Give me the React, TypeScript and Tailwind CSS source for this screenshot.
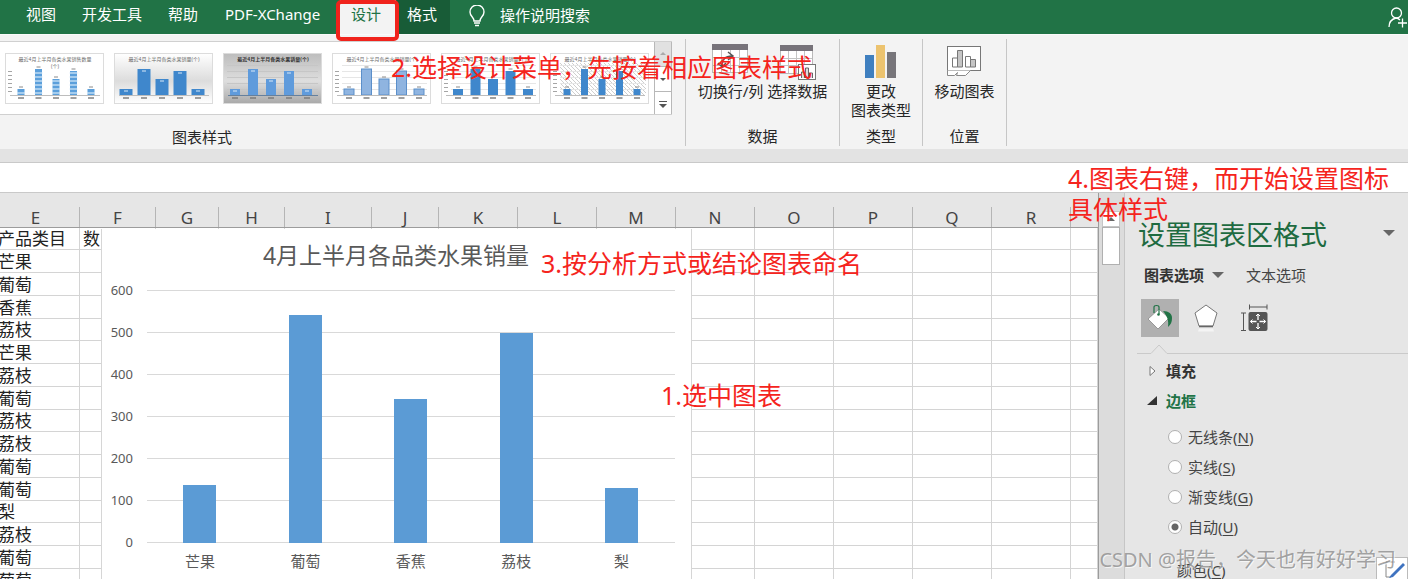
import React from "react";

const columns = [
  { name: "E", width: "w-[80px]" },
  { name: "F", width: "w-[76px]" },
  { name: "G", width: "w-[63px]" },
  { name: "H", width: "w-[66px]" },
  { name: "I", width: "w-[87px]" },
  { name: "J", width: "w-[67px]" },
  { name: "K", width: "w-[79px]" },
  { name: "L", width: "w-[79px]" },
  { name: "M", width: "w-[79px]" },
  { name: "N", width: "w-[79px]" },
  { name: "O", width: "w-[79px]" },
  { name: "P", width: "w-[79px]" },
  { name: "Q", width: "w-[79px]" },
  { name: "R", width: "w-[79px]" },
  { name: "", width: "" },
];

const rows = [
  "产品类目", "芒果", "葡萄", "香蕉", "荔枝", "芒果", "荔枝", "葡萄",
  "荔枝", "荔枝", "葡萄", "葡萄", "梨", "荔枝", "葡萄", "葡萄",
];

const sales = [
  { name: "芒果", value: 137 },
  { name: "葡萄", value: 542 },
  { name: "香蕉", value: 344 },
  { name: "荔枝", value: 500 },
  { name: "梨", value: 132 },
];

type Look = "striped" | "fade" | "dark" | "pale" | "plain" | "hatched";

function Thumb({ look }: { look: Look }) {
  const heights = [6, 26, 16, 24, 6];
  const wide = look === "fade";
  const barWidth = wide ? 13 : look === "hatched" || look === "striped" ? 7 : 10;
  const color = look === "pale" ? "#8fb4e0" : look === "dark" ? "#5f9bdc" : look === "striped" ? "#5b9fdb" : "#3f87cc";
  const first = look === "pale" || look === "plain" || look === "hatched" ? 17 : wide ? 12 : look === "dark" ? 12 : 16;
  const step = wide || look === "dark" ? 18 : 17.5;
  const grid = look === "striped" ? [] : [12, 18, 24, 30, 36];
  return (
    <svg viewBox="0 0 99 51" className="block h-[51px] w-[99px]" aria-hidden="true">
      <defs>
        <linearGradient id={"bg-" + look} x1="0" y1="0" x2="0" y2="1">
          <stop offset="0" stopColor={look === "dark" ? "#bdbdbd" : "#ffffff"} />
          <stop offset="0.55" stopColor={look === "dark" ? "#dedede" : look === "fade" ? "#dcdcdc" : "#ffffff"} />
          <stop offset="1" stopColor={look === "dark" ? "#a9a9a9" : "#ffffff"} />
        </linearGradient>
        <pattern id="hatch" width="4" height="4" patternUnits="userSpaceOnUse">
          <path d="M0 0L4 4" stroke="#cfcfcf" strokeWidth="1" />
        </pattern>
      </defs>
      <rect x="0.5" y="0.5" width="98" height="50" fill={"url(#bg-" + look + ")"} stroke="#dcdcdc" />
      {look === "hatched" && <rect x="10" y="10" width="86" height="32" fill="url(#hatch)" />}
      {look !== "fade" &&
        grid.map((y) => (
          <path key={y} d={`M${look === "dark" ? 4 : 10} ${y}.5H95`} stroke={look === "dark" ? "#c6c6c6" : "#e6e6e6"} />
        ))}
      {look !== "fade" && look !== "dark" &&
        [18, 22, 26, 30, 34, 38].map((y) => <path key={y} d={`M3 ${y}.5h4`} stroke="#a5a5a5" />)}
      <text x="50" y="8" textAnchor="middle" fontSize="5" fontWeight={look === "dark" ? 700 : 400} fill={look === "dark" ? "#333333" : "#6b6b6b"}>
        {look === "striped" ? "最近4月上半月各类水果销售数量" : "最近4月上半月各类水果销量(个)"}
      </text>
      {look === "striped" && <text x="50" y="15" textAnchor="middle" fontSize="5" fill="#6b6b6b">(个)</text>}
      {heights.map((h, i) => {
        const x = first + i * step;
        return (
          <g key={i}>
            <rect x={x - barWidth / 2} y={42 - h} width={barWidth} height={h} fill={color} stroke={look === "pale" ? "#5b8fca" : "none"} />
            {look === "striped" &&
              [2, 6, 10, 14, 18, 22].filter((v) => v < h).map((v) => (
                <path key={v} d={`M${x - 4} ${42 - v}h8`} stroke="#d9ebfa" strokeWidth="1.2" />
              ))}
            <path d={`M${x - 2} ${wide || look === "dark" ? 44 - h : 40 - h}h4`} stroke={wide || look === "dark" ? "#d7e8f8" : "#8a8a8a"} />
            <path d={`M${x - 3} 45h6`} stroke="#777777" strokeWidth="1.4" />
          </g>
        );
      })}
      <path d="M5 42.5H95" stroke={look === "dark" ? "#65809d" : "#bdbdbd"} />
    </svg>
  );
}

function SwapIcon() {
  return (
    <svg viewBox="0 0 38 38" className="h-[38px] w-[38px]" aria-hidden="true">
      <rect x="1.5" y="1.5" width="35" height="28" fill="#fff" stroke="#b9b9b9" />
      <rect x="1" y="1" width="36" height="6" fill="#77737a" />
      <path d="M10.5 7v22M19.5 7v22M28.5 7v22M2 14.5h34M2 22.5h34" stroke="#c4c4c4" />
      <path d="M17 9l5 4-5 4M21 13c-7 0-10 4-10 10M7 20l4 4 4-4" fill="none" stroke="#555" strokeWidth="1.5" />
    </svg>
  );
}

function SelectDataIcon() {
  return (
    <svg viewBox="0 0 38 38" className="h-[38px] w-[38px]" aria-hidden="true">
      <rect x="2.5" y="2.5" width="32" height="28" fill="#fff" stroke="#b9b9b9" />
      <rect x="2" y="2" width="33" height="6" fill="#77737a" />
      <path d="M10.5 8v22M18.5 8v22M26.5 8v22M3 15.5h31M3 22.5h31" stroke="#c4c4c4" />
      <rect x="20.5" y="21.5" width="17" height="15" fill="#fff" stroke="#777" />
      <path d="M23.5 35v-6h3v6M27.5 35V25h3v10M31.5 35v-5h3v5" fill="#ddd" stroke="#666" />
    </svg>
  );
}

function ChartTypeIcon() {
  return (
    <svg viewBox="0 0 38 38" className="h-[38px] w-[38px]" aria-hidden="true">
      <rect x="3" y="12" width="9" height="23" fill="#3f7fbf" />
      <rect x="14" y="2" width="9" height="33" fill="#ecc36f" />
      <rect x="25" y="9" width="9" height="26" fill="#77757a" />
    </svg>
  );
}

function MoveChartIcon() {
  return (
    <svg viewBox="0 0 38 38" className="h-[38px] w-[38px]" aria-hidden="true">
      <rect x="2.5" y="3.5" width="33" height="24" fill="#fff" stroke="#777" />
      <path d="M7.5 24v-9h5v9z" fill="#fff" stroke="#777" />
      <path d="M12.5 24V7.5h5V24z" fill="#c5c5c5" stroke="#777" />
      <path d="M20.5 24V13.5h5V24z" fill="#fff" stroke="#777" />
      <path d="M25.5 24v-7.5h5V24z" fill="#c5c5c5" stroke="#777" />
      <path d="M2.5 27.5v5h7l3-3-1 3h9l5-5" fill="#fff" stroke="#888" />
    </svg>
  );
}

function RibbonGroup({ label, width, children }: { label: string; width: string; children: React.ReactNode }) {
  return (
    <section aria-label={label} className={"mt-1 flex h-[107px] shrink-0 flex-col border-r border-[#c6c6c6] " + width}>
      <div className="flex h-[88px] justify-center gap-1 pt-1">{children}</div>
      <div className="text-center leading-5">{label}</div>
    </section>
  );
}

function RibbonButton({ icon, lines }: { icon: React.ReactNode; lines: string[] }) {
  return (
    <button className="flex h-20 shrink-0 flex-col items-center whitespace-nowrap">
      <span className="mb-px">{icon}</span>
      {lines.map((line) => (
        <span key={line} className="block leading-[19px]">{line}</span>
      ))}
    </button>
  );
}

function SalesChart() {
  const base = 314;
  return (
    <svg viewBox="0 0 591 362" className="absolute left-[101px] top-[36px] h-[362px] w-[591px] bg-white" role="img" aria-label="4月上半月各品类水果销量">
      <path d="M0.5 0V362M590.5 0V362" stroke="#d6d6d6" />
      <text x="295" y="35" textAnchor="middle" fontSize="23" fill="#595959">4月上半月各品类水果销量</text>
      {[0, 100, 200, 300, 400, 500, 600].map((tick) => {
        const y = Math.round(base - tick * 0.42);
        return (
          <g key={tick}>
            <path d={`M46 ${y - 0.5}H574`} stroke="#d9d9d9" />
            <text x="32" y={y + 4} textAnchor="end" fontSize="13" fill="#595959">{tick}</text>
          </g>
        );
      })}
      {sales.map((item, i) => {
        const center = 99 + i * 105.4;
        const height = Math.round(item.value * 0.42);
        return (
          <g key={item.name}>
            <rect x={Math.round(center - 16.6)} y={base - height} width="33" height={height} fill="#5b9bd5" />
            <text x={center} y="338" textAnchor="middle" fontSize="15" fill="#595959">{item.name}</text>
          </g>
        );
      })}
    </svg>
  );
}

function Worksheet() {
  return (
    <main className="relative min-w-0 flex-1 overflow-hidden border-r border-[#9c9c9c] bg-white">
      <table className="w-full table-fixed border-separate border-spacing-0">
        <colgroup>
          {columns.map((c, i) => <col key={i} className={c.width} />)}
        </colgroup>
        <thead>
          <tr>
            {columns.map((c, i) => (
              <th key={i} className="h-[35px] border-b border-[#9c9c9c] bg-[#e6e6e6] p-0 align-bottom text-[17px] font-normal text-[#444]">
                <div className={(i === 0 ? "pr-2 " : "") + (i < 14 ? "h-5 border-r border-[#b5b5b5] leading-[22px]" : "h-5")}>{c.name}</div>
              </th>
            ))}
          </tr>
        </thead>
        <tbody>
          {rows.map((row, r) => (
            <tr key={r}>
              {columns.map((c, i) => (
                <td key={i} className={(r % 4 === 0 ? "h-[22px]" : "h-[23px]") + " whitespace-nowrap border-b border-r border-[#d4d4d4] p-0 align-bottom text-[17px] leading-5 text-[#222]"}>
                  {i === 0 && <span className="-ml-[2px] block">{row}</span>}
                  {i === 1 && r === 0 && <span className="block pl-[3px]">数</span>}
                </td>
              ))}
            </tr>
          ))}
        </tbody>
      </table>
      <SalesChart />
    </main>
  );
}

const borderOptions = [
  { text: "无线条", letter: "N" },
  { text: "实线", letter: "S" },
  { text: "渐变线", letter: "G" },
  { text: "自动", letter: "U" },
];

function FormatPane() {
  return (
    <aside className="w-[283px] shrink-0 bg-[#e6e6e6] text-[15px] text-[#444]">
      <header className="flex items-center pl-[13px] pr-[13px] pt-[24px]">
        <h2 className="flex-1 whitespace-nowrap text-[27px] leading-[36px] text-[#1e6b41]">设置图表区格式</h2>
        <button aria-label="窗格选项">
          <svg viewBox="0 0 12 8" className="mb-1 h-2 w-3"><path d="M0 1h12L6 7z" fill="#666" /></svg>
        </button>
      </header>
      <div className="flex items-center pl-[19px] pt-3 leading-5">
        <button className="flex items-center gap-2 font-bold text-[#333]">
          图表选项
          <svg viewBox="0 0 12 8" className="h-2 w-3" aria-hidden="true"><path d="M0 1h12L6 7z" fill="#666" /></svg>
        </button>
        <button className="ml-[22px]">文本选项</button>
      </div>
      <div className="flex pl-4 pt-[14px]">
        <button aria-label="填充与线条" className="h-[38px] w-[38px] bg-[#b0b0b0]">
          <svg viewBox="0 0 38 38" className="h-full w-full">
            <path d="M7 20L18 10l10 9-11 11z" fill="#fff" stroke="#888" strokeWidth="0.8" />
            <path d="M13 14V8c0-2 5-2 5 0v7" fill="none" stroke="#217346" strokeWidth="1.2" />
            <circle cx="17.5" cy="15.500" r="1.3" fill="#217346" />
            <path d="M22 12c6 0 9 3 9 7 0 4-1 6-4 9 1-7-1-11-5-16z" fill="#217346" />
          </svg>
        </button>
        <button aria-label="效果" className="ml-2 h-[38px] w-[38px]">
          <svg viewBox="0 0 38 38" className="h-full w-full">
            <path d="M19 6l11 8-4 13H12L8 14z" fill="#fff" stroke="#777" />
            <path d="M12 27.5h14" stroke="#666" strokeWidth="1.5" />
            <path d="M12 29.5h14l1 3H11z" fill="#f4f4f4" />
          </svg>
        </button>
        <button aria-label="大小与属性" className="ml-3 h-[38px] w-[38px]">
          <svg viewBox="0 0 38 38" className="h-full w-full" fill="none">
            <path d="M12.5 5.5v5M30 5.500v5M12.5 8H30M4 14h5M4 31.500h5M6.5 14v17.500" stroke="#555" />
            <rect x="11.5" y="13" width="19" height="19" rx="2" fill="#555" />
            <path d="M21 15v6M21 24v6M13.500 22.500h6M22.500 22.500h6" stroke="#fff" strokeWidth="1.3" />
            <path d="M19 17l2-2 2 2M19 28l2 2 2-2M15.500 20.500l-2 2 2 2M26.500 20.500l2 2-2 2" stroke="#fff" />
          </svg>
        </button>
      </div>
      <svg viewBox="0 0 271 11" preserveAspectRatio="xMinYMin slice" className="ml-3 mt-[7px] block h-[11px] w-[271px]" aria-hidden="true">
        <path d="M0 9.5H14L22 1l8 8.5H271" fill="none" stroke="#cacaca" />
      </svg>
      <button className="mt-[6px] flex items-center pl-[23px] font-bold leading-5 text-[#333]">
        <svg viewBox="0 0 10 12" className="mr-2 h-3 w-[10px]" aria-hidden="true"><path d="M2 1.5v9L7 6z" fill="#fff" stroke="#777" /></svg>
        填充
      </button>
      <button className="mt-[10px] flex items-center pl-[22px] font-bold leading-5 text-[#217346]">
        <svg viewBox="0 0 11 12" className="mr-2 h-3 w-[11px]" aria-hidden="true"><path d="M10 1v9H0z" fill="#333" /></svg>
        边框
      </button>
      <fieldset className="flex flex-col gap-[10px] pl-[43px] pt-[16px]">
        {borderOptions.map((o) => (
          <label key={o.letter} className="flex items-center gap-[6px] whitespace-nowrap leading-5">
            <input
              type="radio"
              name="border"
              defaultChecked={o.letter === "U"}
              className="h-[14px] w-[14px] appearance-none rounded-full border border-[#b0b0b0] bg-white checked:bg-[radial-gradient(circle,#666_3px,#fff_4px)]"
            />
            <span>{o.text}(<u className="underline-offset-2">{o.letter}</u>)</span>
          </label>
        ))}
      </fieldset>
      <div className="flex items-start justify-between pl-[52px] pt-5">
        <span className="pt-[3px] leading-5">颜色(<u className="underline-offset-2">C</u>)</span>
        <button aria-label="轮廓颜色" className="h-[32px] w-[32px] border border-[#bbb] bg-white">
          <svg viewBox="0 0 30 30" className="h-full w-full">
            <path d="M9 4v15h5M9 4h9" fill="none" stroke="#888" />
            <path d="M14 17L26 5l2 2-12 12-4 1z" fill="#3f73c0" />
          </svg>
        </button>
      </div>
    </aside>
  );
}

const note = "pointer-events-none absolute z-10 text-[25px] leading-[31px] text-[#f5241d] ";

export default function App() {
  return (
    <div className="relative flex h-screen flex-col overflow-hidden bg-[#e3e3e3] font-['Noto_Sans','Noto_Sans_CJK_SC',sans-serif] text-[15px] text-[#262626]">
      <nav className="flex h-[34px] shrink-0 items-stretch bg-[#217346] pl-[26px] leading-7 text-white">
        <button className="flex w-[56px]">视图</button>
        <button className="flex w-[86px]">开发工具</button>
        <button className="flex w-[57px]">帮助</button>
        <button className="flex w-[115px]">PDF-XChange</button>
        <button className="relative flex w-[56px] bg-[#f3f3f3] pl-[11px] text-[#217346]">
          设计
          <span className="absolute -left-[4px] top-0 h-[41px] w-[63px] rounded-[5px] border-[4px] border-[#f0231c]" />
        </button>
        <button className="flex w-[54px] bg-[#185c37] pl-[11px]">格式</button>
        <button className="flex items-start pl-[18px]">
          <svg viewBox="0 0 18 22" className="mr-[14px] mt-[5px] h-[22px] w-[18px]" fill="none" stroke="#fff" strokeWidth="1.4" aria-hidden="true">
            <path d="M6 16c0-4-4-4.500-4-9a7 7 0 0 1 14 0c0 4.500-4 5-4 9z" />
            <path d="M6 18h6M7 20.500h4" />
          </svg>
          <span className="pt-px">操作说明搜索</span>
        </button>
        <button aria-label="共享" className="ml-auto">
          <svg viewBox="0 0 21 22" className="block h-[22px] w-[21px]" fill="none" stroke="#fff" strokeWidth="1.3" aria-hidden="true">
            <circle cx="9.5" cy="7" r="5" />
            <path d="M2 21c0-5 3-8 7-9 2 0 3 1 4 2M11 17h9M15.500 12.500v9" />
          </svg>
        </button>
      </nav>

      <div className="flex h-[115px] shrink-0 border-t border-[#fafafa] bg-[#f3f3f3]">
        <section aria-label="图表样式" className="mt-1 flex h-[107px] w-[686px] shrink-0 flex-col border-r border-[#c6c6c6]">
          <div className="mt-[2px] flex h-[74px] w-[672px] shrink-0 border-y border-[#d0d0d0] bg-white">
            <div className="flex flex-1 items-center gap-[10px] pl-[5px]">
              {(["striped", "fade", "dark", "pale", "plain", "hatched"] as Look[]).map((look) => (
                <button key={look} aria-label="图表样式"><Thumb look={look} /></button>
              ))}
            </div>
            <div className="flex w-[18px] flex-col border-x border-[#b8b8b8]">
              <button aria-label="上一行" className="flex-1 bg-[#e1e1e1]">
                <svg viewBox="0 0 16 24" className="h-full w-full"><path d="M5 13h6l-3-3z" fill="#aaa" /></svg>
              </button>
              <button aria-label="下一行" className="flex-1 border-t border-[#b8b8b8]">
                <svg viewBox="0 0 16 24" className="h-full w-full"><path d="M5 11h6l-3 3z" fill="#555" /></svg>
              </button>
              <button aria-label="其他" className="flex-1 border-t border-[#b8b8b8]">
                <svg viewBox="0 0 16 24" className="h-full w-full"><path d="M4 9.5h8" stroke="#555" /><path d="M4 12h8l-4 4z" fill="#555" /></svg>
              </button>
            </div>
          </div>
          <div className="mt-3 pl-[172px] leading-5">图表样式</div>
        </section>
        <RibbonGroup label="数据" width="w-[154px]">
          <RibbonButton icon={<SwapIcon />} lines={["切换行/列"]} />
          <RibbonButton icon={<SelectDataIcon />} lines={["选择数据"]} />
        </RibbonGroup>
        <RibbonGroup label="类型" width="w-[83px]">
          <RibbonButton icon={<ChartTypeIcon />} lines={["更改", "图表类型"]} />
        </RibbonGroup>
        <RibbonGroup label="位置" width="w-[84px]">
          <RibbonButton icon={<MoveChartIcon />} lines={["移动图表"]} />
        </RibbonGroup>
      </div>

      <div className="mt-[13px] h-[31px] shrink-0 border-y border-[#c9c9c9] bg-white" />

      <div className="flex min-h-0 flex-1">
        <Worksheet />
        <div className="flex w-[26px] shrink-0 flex-col border-r border-[#c6c6c6] bg-[#dcdcdc] pl-[3px] pr-[4px] pt-[18px]">
          <button aria-label="向上滚动" className="h-4 border border-[#c6c6c6] bg-white">
            <svg viewBox="0 0 16 14" className="h-full w-full"><path d="M4 9h8L8 5z" fill="#666" /></svg>
          </button>
          <div className="h-[38px] border border-[#b0b0b0] bg-white" />
        </div>
        <FormatPane />
      </div>

      <p className={note + "left-[391px] top-[52px] whitespace-nowrap"}>2.选择设计菜单，先按着相应图表样式</p>
      <p className={note + "left-[541px] top-[248px] whitespace-nowrap"}>3.按分析方式或结论图表命名</p>
      <p className={note + "left-[661px] top-[380px] whitespace-nowrap"}>1.选中图表</p>
      <p className={note + "left-[1068px] top-[163px] whitespace-nowrap"}>4.图表右键，而开始设置图标<br />具体样式</p>
      <p className="pointer-events-none absolute bottom-[5px] right-[12px] z-10 whitespace-nowrap text-[20px] leading-7 text-[#8d8d8d]/80 [text-shadow:1px_1px_0_#ffffffaa]">
        CSDN @报告，今天也有好好学习
      </p>
    </div>
  );
}
